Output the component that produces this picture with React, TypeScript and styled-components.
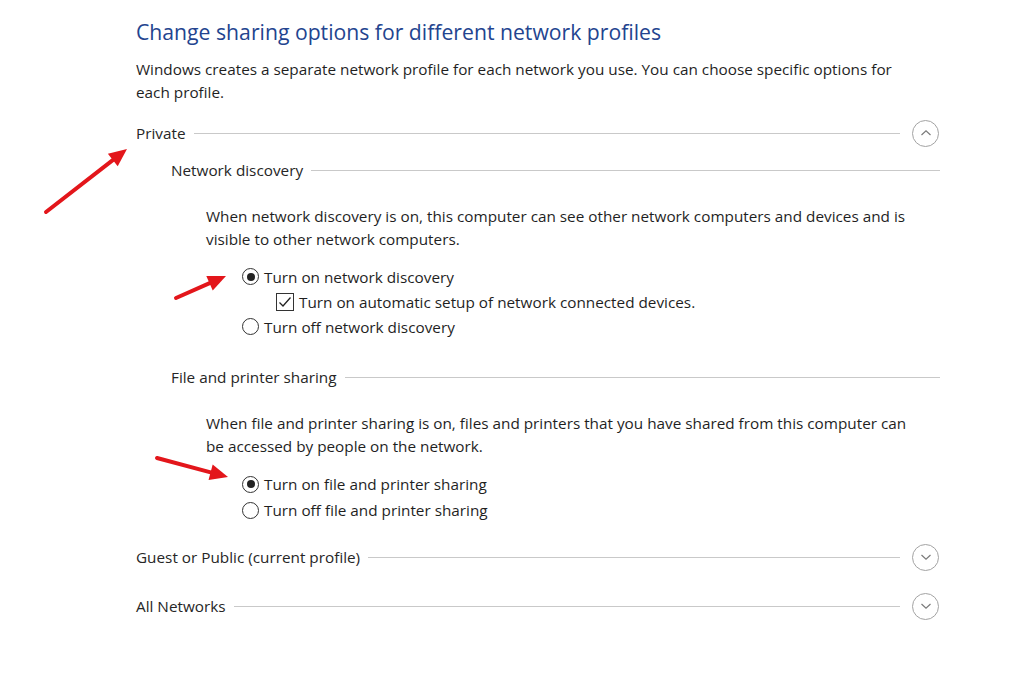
import styled, { createGlobalStyle } from "styled-components";

const GlobalStyle = createGlobalStyle`
  html, body {
    margin: 0;
    padding: 0;
    background: #ffffff;
  }
  body {
    font-family: "Open Sans", "Noto Sans", sans-serif;
    color: #1f1f1f;
  }
`;

const Page = styled.div`
  position: relative;
  width: 1024px;
  height: 679px;
  overflow: hidden;
`;

const Content = styled.div`
  display: flex;
  flex-direction: column;
  width: 804px;
  padding: 18px 0 0 136px;
`;

const Title = styled.h1`
  margin: 0;
  font-size: 21.2px;
  line-height: 28px;
  font-weight: 400;
  color: #23448f;
`;

const Text = styled.p<{ $top: number; $max: number }>`
  margin: ${(p) => p.$top}px 0 0;
  max-width: ${(p) => p.$max}px;
  font-size: 15.3px;
  line-height: 22.5px;
  color: #1f1f1f;
`;

const Header = styled.div<{ $top: number }>`
  display: flex;
  align-items: center;
  gap: 8px;
  height: 26px;
  margin-top: ${(p) => p.$top}px;
  font-size: 15.3px;
  color: #262626;
  white-space: nowrap;
`;

const Rule = styled.div`
  flex: 1;
  height: 1px;
  background: #c9c9c9;
`;

const Toggle = styled.button`
  display: flex;
  align-items: center;
  justify-content: center;
  width: 27px;
  height: 27px;
  margin: 0 1px 0 4px;
  padding: 0;
  border: 1px solid #a3a3a3;
  border-radius: 50%;
  background: #fff;
`;

const Group = styled.div`
  display: flex;
  flex-direction: column;
  padding-left: 35px;
`;

const Body = styled.div`
  display: flex;
  flex-direction: column;
  padding-left: 35px;
`;

const Options = styled.div<{ $top: number }>`
  display: flex;
  flex-direction: column;
  margin-top: ${(p) => p.$top}px;
  padding-left: 36px;
`;

const Option = styled.label<{ $h: number; $indent?: number }>`
  display: flex;
  align-items: center;
  gap: 5px;
  height: ${(p) => p.$h}px;
  padding-left: ${(p) => p.$indent ?? 0}px;
  font-size: 15.3px;
  color: #1f1f1f;
`;

const Radio = styled.span<{ $on?: boolean }>`
  position: relative;
  box-sizing: border-box;
  width: 17px;
  height: 17px;
  border: 1px solid #333;
  border-radius: 50%;
  &::after {
    content: "";
    display: ${(p) => (p.$on ? "block" : "none")};
    position: absolute;
    left: 3.5px;
    top: 3.5px;
    width: 8px;
    height: 8px;
    border-radius: 50%;
    background: #222;
  }
`;

const Box = styled.span`
  display: flex;
  align-items: center;
  justify-content: center;
  box-sizing: border-box;
  width: 18px;
  height: 18px;
  border: 1px solid #333;
`;

const Overlay = styled.svg`
  position: absolute;
  left: 0;
  top: 0;
  pointer-events: none;
`;

function Chevron({ up }: { up?: boolean }) {
  return (
    <svg width="12" height="8" viewBox="0 0 12 8">
      <path
        d={up ? "M1.5 6 L6 1.8 L10.5 6" : "M1.5 2 L6 6.2 L10.5 2"}
        fill="none"
        stroke="#7a7a7a"
        strokeWidth="1.2"
      />
    </svg>
  );
}

function Arrow({ x1, y1, x2, y2 }: { x1: number; y1: number; x2: number; y2: number }) {
  const dx = x2 - x1;
  const dy = y2 - y1;
  const len = Math.hypot(dx, dy);
  const ux = dx / len;
  const uy = dy / len;
  const head = 18;
  const half = 8;
  const bx = x2 - ux * head;
  const by = y2 - uy * head;
  const pts = `${x2},${y2} ${bx - uy * half},${by + ux * half} ${bx + uy * half},${by - ux * half}`;
  return (
    <g>
      <line x1={x1} y1={y1} x2={bx + ux * 2} y2={by + uy * 2} stroke="#e3161b" strokeWidth="4" strokeLinecap="round" />
      <polygon points={pts} fill="#e3161b" />
    </g>
  );
}

export default function App() {
  return (
    <Page>
      <GlobalStyle />
      <Content>
        <Title>Change sharing options for different network profiles</Title>
        <Text $top={12} $max={780}>
          Windows creates a separate network profile for each network you use. You can choose specific options for
          each profile.
        </Text>

        <Header $top={17}>
          Private
          <Rule />
          <Toggle>
            <Chevron up />
          </Toggle>
        </Header>

        <Group>
          <Header $top={11}>
            Network discovery
            <Rule />
          </Header>
          <Body>
            <Text $top={22} $max={705}>
              When network discovery is on, this computer can see other network computers and devices and is
              visible to other network computers.
            </Text>
            <Options $top={14}>
              <Option $h={25}>
                <Radio $on />
                Turn on network discovery
              </Option>
              <Option $h={25} $indent={34}>
                <Box>
                  <svg width="14" height="12" viewBox="0 0 14 12">
                    <path d="M1.5 6.5 L5 10 L12.5 1.5" fill="none" stroke="#222" strokeWidth="1.3" />
                  </svg>
                </Box>
                Turn on automatic setup of network connected devices.
              </Option>
              <Option $h={25}>
                <Radio />
                Turn off network discovery
              </Option>
            </Options>
          </Body>

          <Header $top={25}>
            File and printer sharing
            <Rule />
          </Header>
          <Body>
            <Text $top={22} $max={705}>
              When file and printer sharing is on, files and printers that you have shared from this computer can
              be accessed by people on the network.
            </Text>
            <Options $top={14}>
              <Option $h={26}>
                <Radio $on />
                Turn on file and printer sharing
              </Option>
              <Option $h={26}>
                <Radio />
                Turn off file and printer sharing
              </Option>
            </Options>
          </Body>
        </Group>

        <Header $top={21}>
          Guest or Public (current profile)
          <Rule />
          <Toggle>
            <Chevron />
          </Toggle>
        </Header>
        <Header $top={23}>
          All Networks
          <Rule />
          <Toggle>
            <Chevron />
          </Toggle>
        </Header>
      </Content>

      <Overlay width="1024" height="679">
        <Arrow x1={46} y1={212} x2={127} y2={149} />
        <Arrow x1={176} y1={298} x2={226} y2={276} />
        <Arrow x1={157} y1={458} x2={228} y2={477} />
      </Overlay>
    </Page>
  );
}
